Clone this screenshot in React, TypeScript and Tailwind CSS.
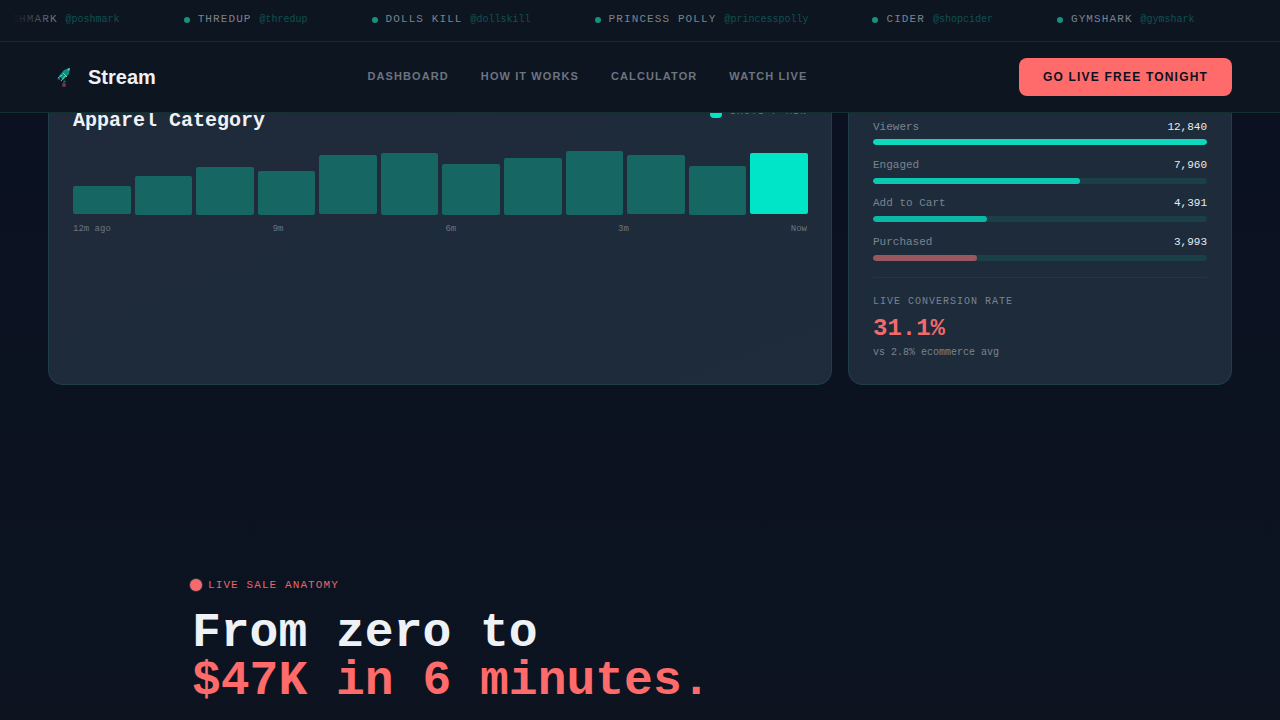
const tickerItems = [
  { name: "POSHMARK", handle: "@poshmark" },
  { name: "THREDUP", handle: "@thredup" },
  { name: "DOLLS KILL", handle: "@dollskill" },
  { name: "PRINCESS POLLY", handle: "@princesspolly" },
  { name: "CIDER", handle: "@shopcider" },
  { name: "GYMSHARK", handle: "@gymshark" },
  { name: "POSHMARK", handle: "@poshmark" },
];

const navLinks = ["DASHBOARD", "HOW IT WORKS", "CALCULATOR", "WATCH LIVE"];

// top edges wobble a little, bottoms too, so each bar has its own classes
const bars = [
  "h-[28px] mb-px bg-[#166663]",
  "h-[39px] bg-[#166663]",
  "h-[48px] bg-[#166663]",
  "h-[44px] bg-[#166663]",
  "h-[59px] mb-px bg-[#166663]",
  "h-[62px] bg-[#166663]",
  "h-[51px] bg-[#166663]",
  "h-[57px] bg-[#166663]",
  "h-[64px] bg-[#166663]",
  "h-[59px] mb-px bg-[#166663]",
  "h-[49px] bg-[#166663]",
  "h-[61px] mb-px bg-[#00e5c8]",
];

const timeLabels = ["12m ago", "9m", "6m", "3m", "Now"];

const funnel = [
  { label: "Viewers", value: "12,840", width: "w-full", fill: "bg-[#10d8bd]", labelGap: "mb-[5px]", gap: "mb-[13px]" },
  { label: "Engaged", value: "7,960", width: "w-[62%]", fill: "bg-[#0cc8b1]", labelGap: "mb-[6px]", gap: "mb-[12px]" },
  { label: "Add to Cart", value: "4,391", width: "w-[34.2%]", fill: "bg-[#0ab8a5]", labelGap: "mb-[6px]", gap: "mb-[13px]" },
  { label: "Purchased", value: "3,993", width: "w-[31.1%]", fill: "bg-[#99585f]", labelGap: "mb-[6px]", gap: "mb-0" },
];

function RocketLogo() {
  return (
    <svg width="20" height="24" viewBox="0 0 20 24" fill="none" className="shrink-0">
      <path d="M16 3 L10 5 L5 11 L9 15 L15 9 Z" fill="#0f8d7e" />
      <path d="M16 3 L13 4 L15 6 Z" fill="#4fd8c2" />
      <path d="M4 13 L8 10 M7 16 L12 10 M9 8 L13 12" stroke="#5fd8c4" strokeWidth="1" />
      <path d="M3 14 L6 12 L6 15 Z" fill="#0c7c70" />
      <path d="M10 15 L12 17 L9 18 Z" fill="#0c7c70" />
      <circle cx="10" cy="20" r="2" fill="#7a343b" />
    </svg>
  );
}

function Ticker() {
  return (
    <div className="relative h-[42px] border-b border-[#12302f] overflow-hidden flex items-center">
      <div className="flex items-center gap-16 -ml-[18px] mb-[2px] whitespace-nowrap shrink-0 font-['Liberation_Mono',monospace]">
        {tickerItems.map((item, i) => (
          <div key={i} className="flex items-center gap-2 shrink-0">
            <span className="w-[6px] h-[6px] rounded-full bg-[#14917f]" />
            <span className="text-[11px] tracking-[0.1em] text-[#7b828c]">{item.name}</span>
            <span className="text-[10px] text-[#0f524f]">{item.handle}</span>
          </div>
        ))}
      </div>
      <div className="absolute inset-y-0 left-0 w-[60px] bg-gradient-to-r from-[#0d1521] from-20% to-transparent" />
      <div className="absolute inset-y-0 right-0 w-[40px] bg-gradient-to-l from-[#0d1521] from-50% to-[#0d1521]/60" />
    </div>
  );
}

function Nav() {
  return (
    <nav className="h-[71px] border-b border-[#12302f] pl-[54px] pr-[48px] flex items-center justify-between font-['Liberation_Sans',sans-serif]">
      <div className="flex items-center gap-[14px]">
        <RocketLogo />
        <span className="text-[20px] font-bold text-[#eef2f6]">Stream</span>
      </div>
      <div className="flex items-center gap-8 mb-[2px]">
        {navLinks.map((link) => (
          <span key={link} className="text-[11px] font-bold tracking-[0.1em] text-[#6c7480]">
            {link}
          </span>
        ))}
      </div>
      <button className="h-[38px] w-[213px] rounded-lg bg-[#ff6b6b] text-[12px] font-bold tracking-[0.1em] text-[#0b111e] mb-[1px]">
        GO LIVE FREE TONIGHT
      </button>
    </nav>
  );
}

function ChartCard() {
  return (
    <div className="rounded-[14px] border border-[#1f3f47] bg-gradient-to-br from-[#1f2a3a] to-[#1e2c3b] pl-6 pr-[23px] pt-6">
      <div className="flex items-start justify-between">
        <h2 className="pt-px text-[20px] leading-[28px] font-bold text-[#eef2f6]">Apparel Category</h2>
        <div className="flex items-center gap-2 pr-px -mt-[2px]">
          <span className="w-3 h-3 rounded-sm bg-[#00e5c8]" />
          <span className="text-[10px] tracking-[1px] text-[#6c7480]">SHOTS / MIN</span>
        </div>
      </div>
      <div className="mt-4 h-[64px] flex items-end gap-1">
        {bars.map((cls, i) => (
          <div key={i} className={`flex-1 rounded-[2px] ${cls}`} />
        ))}
      </div>
      <div className="mt-[7px] flex justify-between text-[9px] leading-[14px] text-[#6c7480] pr-px">
        {timeLabels.map((t) => (
          <span key={t}>{t}</span>
        ))}
      </div>
    </div>
  );
}

function FunnelCard() {
  return (
    <div className="rounded-[14px] border border-[#1f3f47] bg-[#1e2b3a] px-6 pt-[38px] pb-[24px]">
      {funnel.map((row) => (
        <div key={row.label} className={row.gap}>
          <div className={`flex justify-between text-[11px] leading-[14px] ${row.labelGap}`}>
            <span className="text-[#7a8490]">{row.label}</span>
            <span className="text-[#e6ebf0]">{row.value}</span>
          </div>
          <div className="h-[6px] rounded-full bg-[#1b3f46] overflow-hidden">
            <div className={`h-full rounded-full ${row.width} ${row.fill}`} />
          </div>
        </div>
      ))}
      <div className="mt-4 pt-[17px] border-t border-[#233742]">
        <div className="text-[10px] leading-[14px] tracking-[1px] text-[#7a8490]">LIVE CONVERSION RATE</div>
        <div className="mt-1 text-[24px] leading-[32px] font-bold text-[#f26a6c]">31.1%</div>
        <div className="mt-[1px] text-[10px] leading-[14px] text-[#7a8490]">vs 2.8% ecommerce avg</div>
      </div>
    </div>
  );
}

export default function App() {
  return (
    <div className="h-[720px] overflow-hidden bg-gradient-to-b from-[#0a1020] to-[#0d1420] font-['Liberation_Mono',monospace]">
      <header className="relative z-10 bg-[#0d1521]">
        <Ticker />
        <Nav />
      </header>

      <main className="-mt-[32px] px-12 grid grid-cols-[784px_384px] gap-4">
        <ChartCard />
        <FunnelCard />
      </main>

      <section className="mt-[192px] mx-auto w-[896px]">
        <div className="flex items-center gap-2">
          <span className="w-2 h-2 rounded-full bg-[#f76a6c] scale-150 shadow-[0_0_0_0.5px_rgba(255,255,255,0.2)]" />
          <span className="text-[11px] leading-[16px] tracking-[0.1em] text-[#e8666a]">LIVE SALE ANATOMY</span>
        </div>
        <h1 className="mt-[16px] text-[48px] leading-[48px] font-bold text-[#eef2f6]">
          From zero to
          <br />
          <span className="text-[#ff6b6b]">$47K in 6 minutes.</span>
        </h1>
      </section>
    </div>
  );
}
